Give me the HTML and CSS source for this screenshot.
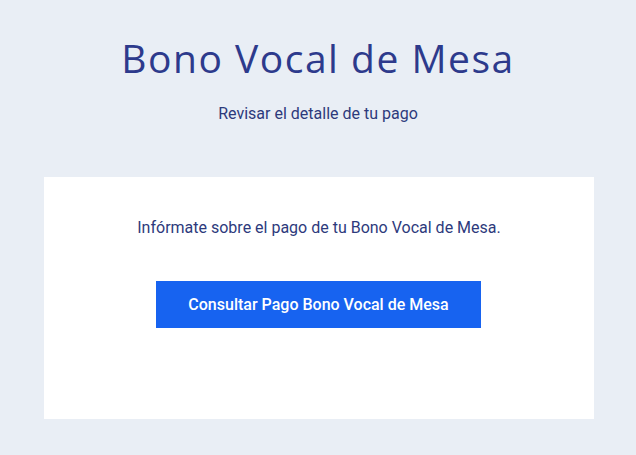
FILE: index.html
```html
<!DOCTYPE html>
<html lang="es">
<head>
    <meta charset="UTF-8">
    <meta name="viewport" content="width=device-width, initial-scale=1.0">
    <title>Bono Vocal de Mesa</title>
    <link rel="stylesheet" href="styles.css">
</head>
<body>
<header class="hero">
    <h1>Bono Vocal de Mesa</h1>
    <p>Revisar el detalle de tu pago</p>
</header>
<div class="card">
    <p>Infórmate sobre el pago de tu Bono Vocal de Mesa.</p>
    <a href="#" class="btn">Consultar Pago Bono Vocal de Mesa</a>
</div>
</body>
</html>
```

FILE: styles.css
```css
body {
    font-family: Roboto, "Liberation Sans", sans-serif;
    background-color: #e9eef5;
    color: #2d3a7c;
    margin: 0;
    padding: 0;
}
.hero {
    text-align: center;
    padding-top: 34px;
    height: 143px;
}
.hero h1 {
    font-family: "Open Sans", sans-serif;
    font-weight: 400;
    font-size: 39px;
    letter-spacing: 1.5px;
    color: #2d3a8c;
    margin: 0;
    line-height: 48px;
}
.hero p {
    font-size: 16px;
    margin: 22px 0 0;
}
.card {
    background: white;
    margin: 0 42px 0 44px;
    height: 242px;
    display: flex;
    flex-direction: column;
    align-items: center;
    box-sizing: border-box;
    padding-top: 42px;
}
.card p {
    font-size: 16px;
    margin: 0;
    line-height: 18px;
}
.btn {
    display: flex;
    align-items: center;
    justify-content: center;
    width: 325px;
    height: 47px;
    margin-top: 44px;
    margin-right: 1px;
    background-color: #1763f0;
    color: white;
    text-decoration: none;
    font-size: 16px;
    font-weight: 500;
}
```
